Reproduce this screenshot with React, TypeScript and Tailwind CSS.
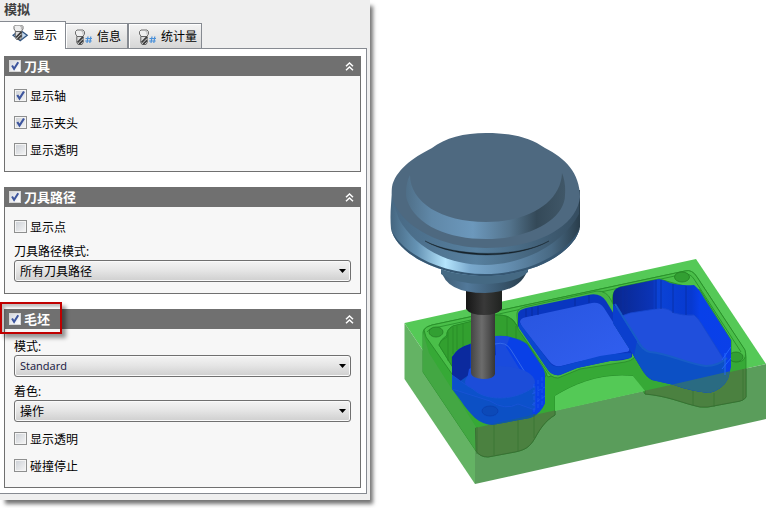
import { useState, type ReactNode } from "react";

const line = "border-[#868a91]";

function MillShape() {
  return (
    <>
      <path d="M3.500 2.500 L5 1 H11 L12.500 2.500 V5 L10.800 7.500 H5.200 L3.500 5 Z" fill="#efefef" stroke="#6f6f6f" strokeWidth="1" />
      <path d="M9.500 2.500 H11 V5.500" fill="none" stroke="#bdbdbd" strokeWidth="1.200" />
      <path d="M4.800 7.500 H11.200 V13.500 L10 15.500 H6 L4.800 13.500 Z" fill="#dcdcdc" stroke="#666" strokeWidth="1" />
      <path d="M5.500 13.500 L11 7.800 M7.200 15.200 L11 11.300" stroke="#3c3c3c" strokeWidth="1.800" />
    </>
  );
}

function DisplayIcon() {
  return (
    <svg width="17" height="17" viewBox="0 0 17 17" className="-mt-1 shrink-0" aria-hidden="true">
      <path d="M8 5 L15.200 10.300 L8.200 15.800 L1 10.300 Z" fill="#c4daf0" stroke="#2f5380" strokeWidth="1.300" />
      <g transform="translate(-1.500 -1)">
        <MillShape />
      </g>
    </svg>
  );
}

function NumberIcon() {
  return (
    <svg width="18" height="17" viewBox="0 0 18 17" className="shrink-0" aria-hidden="true">
      <g transform="translate(-3 0)">
        <MillShape />
      </g>
      <path d="M13 7.500 L12 14 M15.800 7.500 L14.800 14 M10.500 9.500 H17 M10.200 12 H16.700" stroke="#4a90d9" strokeWidth="1.200" />
    </svg>
  );
}

function Check({ label, defaultChecked = false, header = false }: { label: string; defaultChecked?: boolean; header?: boolean }) {
  return (
    <label className={header ? "flex h-5 items-center gap-[3px] text-[13px] leading-5 font-bold text-white" : "flex h-[27px] items-center gap-[3px]"}>
      <span className="grid shrink-0">
        <input
          type="checkbox"
          defaultChecked={defaultChecked}
          className={`peer appearance-none border bg-linear-to-br [grid-area:1/1] ${
            header ? "size-3 border-[#d8d8d8] from-[#d5d8df] to-white" : "size-[13px] border-[#8e8f8f] from-[#cbcfd5] to-[#f6f6f6] shadow-[inset_0_0_0_1px_#f4f4f4]"
          }`}
        />
        <svg
          viewBox="0 0 13 13"
          className={`pointer-events-none invisible [grid-area:1/1] peer-checked:visible ${header ? "size-3" : "size-[13px]"}`}
          aria-hidden="true"
        >
          <path d="M3.300 6 L5.500 9.500 L10 2.500" fill="none" stroke="#3d559e" strokeWidth="2.200" />
        </svg>
      </span>
      <span className={header ? "" : "pt-0.5"}>{label}</span>
    </label>
  );
}

function Select({ id, label, options, latin = false }: { id: string; label: string; options: string[]; latin?: boolean }) {
  return (
    <div>
      <label htmlFor={id} className="block h-5 leading-6">{label}</label>
      <div className="grid items-center">
        <select
          id={id}
          className={`h-[22px] w-full appearance-none rounded-[3px] border border-[#707070] bg-linear-to-b from-[#f4f4f4] from-0% via-[#e6e6e6] via-45% to-[#cfcfcf] pl-[5px] shadow-[inset_0_0_0_1px_#fafafa] [grid-area:1/1] ${
            latin ? "pt-px text-[11px] text-[#14143c] font-['Open_Sans',sans-serif]" : "pt-0.5"
          }`}
        >
          {options.map((o) => <option key={o}>{o}</option>)}
        </select>
        <svg width="7" height="4" viewBox="0 0 7 4" className="pointer-events-none mr-[5px] justify-self-end [grid-area:1/1]" aria-hidden="true">
          <path d="M0 0 H7 L3.500 4 Z" fill="#000" />
        </svg>
      </div>
    </div>
  );
}

function Group({ title, marked = false, children }: { title: string; marked?: boolean; children: ReactNode }) {
  const [open, setOpen] = useState(true);
  return (
    <section>
      <div className="relative flex h-5 items-center justify-between bg-[#707070] pr-[7px] pl-[5px]">
        {marked && <span className="pointer-events-none absolute -top-[7px] -left-1 h-8 w-[62px] border-2 border-[#c00000] shadow-[4px_4px_4px_rgba(0,0,0,0.4),inset_3px_3px_3px_rgba(0,0,0,0.25)]" />}
        <Check label={title} defaultChecked header />
        <button type="button" aria-label={title} aria-expanded={open} onClick={() => setOpen(!open)}>
          <svg width="9" height="9" viewBox="0 0 9 9" className={open ? "" : "rotate-180"} aria-hidden="true">
            <path d="M1 4.200 L4.500 1 L8 4.200 M1 8.200 L4.500 5 L8 8.200" fill="none" stroke="#fff" strokeWidth="1.500" />
          </svg>
        </button>
      </div>
      {open && <div className="border border-t-0 border-[#707070] bg-[#f7f7f7] px-[9px] pt-1.5 pb-2">{children}</div>}
    </section>
  );
}

function Simulation() {
  return (
    <svg viewBox="370 0 397 508" className="block w-full" role="img">
      <defs>
        <clipPath id="front"><path d="M475 428 L766 364 V419 L475 484 Z" /></clipPath>
        <clipPath id="p1"><path d="M452 357 Q458 347 470 344 L495 336 Q503 335 510 337 Q521 339 527 344 L542 366 Q545 370 545 375 V403 Q541 414 530 418 L492 425 Q482 424 475 418 Q466 409 461 401 L452 389 Z" /></clipPath>
        <clipPath id="p3"><path d="M613 295 Q613 289 620 287 L659 279 Q665 280 670 283 Q681 286 694 285 Q700 290 704 298 L731 340 V367 L728 379 Q722 390 709 393 Q690 391 674 385 L652 380 Q646 377 641 368 L632 353 L613 323 Z" /></clipPath>
        <linearGradient id="bevel"><stop offset="0" stopColor="#4f6f88" /><stop offset=".16" stopColor="#6088a8" /><stop offset=".42" stopColor="#6c98bc" /><stop offset=".65" stopColor="#54748d" /><stop offset=".82" stopColor="#344958" /><stop offset="1" stopColor="#405768" /></linearGradient>
        <linearGradient id="ring"><stop offset="0" stopColor="#456680" /><stop offset=".14" stopColor="#6593b4" /><stop offset=".29" stopColor="#b5e5fd" /><stop offset=".42" stopColor="#7aa9cd" /><stop offset=".62" stopColor="#648eb0" /><stop offset=".85" stopColor="#486983" /><stop offset="1" stopColor="#293d4b" /></linearGradient>
        <linearGradient id="under"><stop offset="0" stopColor="#486984" /><stop offset=".45" stopColor="#57809f" /><stop offset="1" stopColor="#354d60" /></linearGradient>
        <linearGradient id="hub"><stop offset="0" stopColor="#3e5c73" /><stop offset=".3" stopColor="#52799a" /><stop offset="1" stopColor="#263c4b" /></linearGradient>
        <linearGradient id="collar"><stop offset="0" stopColor="#161616" /><stop offset=".5" stopColor="#393939" /><stop offset="1" stopColor="#202320" /></linearGradient>
        <linearGradient id="mill"><stop offset="0" stopColor="#454545" /><stop offset=".45" stopColor="#6c6c6c" /><stop offset=".75" stopColor="#505050" /><stop offset="1" stopColor="#363636" /></linearGradient>
        <linearGradient id="floor" x2="1" y2="1"><stop offset="0" stopColor="#2855df" /><stop offset="1" stopColor="#315ff0" /></linearGradient>
        <linearGradient id="wall3"><stop offset="0" stopColor="#0a268a" /><stop offset=".34" stopColor="#0b34b7" /><stop offset=".38" stopColor="#0b43d5" /><stop offset=".65" stopColor="#0739d0" /><stop offset=".72" stopColor="#0840e9" /><stop offset="1" stopColor="#0b40e8" /></linearGradient>
      </defs>

      <path d="M404.500 323 L696 259 L766 364 L475 428 Z" fill="#55c957" />
      <path d="M404.500 323 L475 428 V484 L404.500 379 Z" fill="#64b364" />
      <path d="M475 428 L766 364 V419 L475 484 Z" fill="#5a9d5b" />

      <path d="M423 332 Q424 327 432 325 L685 271 Q692 269 697 277 L744 349 Q746 352 746 357 V397 Q744 401 735 402 L708 407 Q700 408 692 405 C680 402 667 396 645 394 L633 376 C604 373 577 382 555 396 V415 C545 421 540 429 535 438 C530 447 525 450 515 452 L488 457 Q480 457 476 451 L423 372 Z" fill="#36a936" stroke="#278b29" strokeWidth=".8" />
      <path d="M423 332 V372 L476 451 V427 L429 353 Z" fill="#43a743" />
      <g clipPath="url(#front)">
        <path d="M475 410 L555 390 V415 C545 421 540 429 535 438 C530 447 525 450 515 452 L488 457 Q480 457 476 451 Z M645 376 L746 340 V397 Q744 401 735 402 L708 407 Q700 408 692 405 C680 402 667 396 645 394 Z" fill="#4b8140" stroke="#376a32" strokeWidth=".8" />
      </g>
      <path d="M555 396 C577 382 604 373 633 376 L645 391 L555 411 Z" fill="#54c956" />

      <path d="M424 330 Q425 327 432 325 L685 271 Q692 269 697 277 L745 350 Q747 358 742 361 Q734 363 731 360 L731 340 L700 290 L677 284 L659 279 L620 287 Q610 292 613 305 L632 350 L617 360 L577 368 L548 377 L520 333 Q515 315 500 315 L453 326 Q446 330 447 335 Q440 340 439 345 L455 371 L452 374 L426 337 Z" fill="#4abf49" stroke="#2a912b" strokeWidth="1" />
      <path d="M427 332 Q428 329 434 328 L684 274 Q690 273 694 279 L741 352" fill="none" stroke="#27912a" strokeWidth=".9" />
      <path d="M439 345 Q440 340 447 337 Q446 330 453 326 L496 315 Q511 314 517 326 L547 374 L543 380 L530 348 L500 337 L470 344 L452 357 V366 Z" fill="#32a02f" stroke="#248625" strokeWidth=".7" />
      <path d="M448 332 V361 M453 327 V354 M457 326 V350 M463 324 V347 M507 317 V337 M516 326 V340" stroke="#268b27" strokeWidth=".8" />
      <path d="M517 316 Q516 309 524 307 L597 291 Q607 291 611 300 L637 350 Q637 360 625 362 L580 369 L558 378 Q551 378 547 371 L518 329 Z" fill="#46b744" stroke="#28892a" strokeWidth=".8" />
      <g fill="#329f32" stroke="#247d25" strokeWidth=".8">
        <ellipse cx="436" cy="332" rx="7" ry="5" /><ellipse cx="682" cy="277" rx="7.500" ry="5" /><ellipse cx="736" cy="357" rx="7" ry="5" />
      </g>

      <path d="M518 314 Q518 310 526 308 L588 295 Q600 292 606 301 L632 344 V357 Q625 361 610 361 L577 368 L560 375 Q552 376 548 370 L518 326 Z" fill="#0936c0" />
      <path d="M520 322 Q520 318 527 317 L592 303 Q600 302 604 308 L629 347 Q631 352 625 352 L577 362 L561 366 Q554 367 550 362 L522 327 Z" fill="url(#floor)" />
      <path d="M550 363 Q554 368 562 366 L600 356 Q617 353 631 353 V358 L610 361 L577 368 L560 375 Q552 376 548 370 L519 328 V322 Z" fill="#0b47cf" />
      <path d="M526 309 V317 M532 307 V316 M538 306 V315 M575 298 V306 M589 295 V303" stroke="#082b9e" />

      <g clipPath="url(#p1)">
        <path d="M445 330 H550 V430 H445 Z" fill="#0c50c5" />
        <path d="M452 350 L470 344 V374 L452 387 Z" fill="#0b2a9e" />
        <path d="M470 344 L495 336 L497 362 L470 376 Z" fill="#0837be" />
        <path d="M495 336 H510 L535 390 L465 390 L469 369 L496 355 Z" fill="#1a4bdd" />
        <path d="M510 337 L527 344 L545 373 V405 L533 418 L531 388 L506 347 Z" fill="#0940e7" />
        <path d="M495 344 Q506 341 511 350 L533 385 Q536 392 528 396" fill="none" stroke="#3569e9" />
        <ellipse cx="500" cy="382" rx="35" ry="16" fill="#1c4dd9" />
        <path d="M452 375 Q470 388 473 389 C486 402 517 401 535 386 V410 L518 404 Q505 411 490 401 L452 389 Z" fill="#0c51cb" stroke="#1d55d9" strokeWidth=".7" />
        <ellipse cx="490" cy="411" rx="8" ry="5" fill="#0c49b8" stroke="#0c3eaa" strokeWidth=".7" />
        <path d="M534 384 V413 M538 380 V409 M542 377 V405 M532 394 L545 387 M532 405 L545 396" stroke="#2058ee" strokeWidth=".8" strokeDasharray="4 2" />
        <path d="M475 428 L545 412 V430 Z" fill="#125ba0" />
      </g>
      <path d="M477 427 V454 M494 425 V455 M518 420 V451 M534 414 V438 M693 389 V405 M714 393 V407 M743 369 V399" stroke="#397334" strokeWidth=".8" />

      <g clipPath="url(#p3)">
        <path d="M610 275 H735 V398 H610 Z" fill="url(#wall3)" />
        <path d="M613 319 L630 313 L662 308 Q670 309 674 313 Q684 316 694 315 Q698 318 701 323 L723 358 Q725 364 710 367 Q695 366 649 353 Q640 348 636 342 L613 324 Z" fill="#204fdc" stroke="#1747cf" strokeWidth=".8" />
        <path d="M613 304 L636 341 Q641 350 650 352 C670 354 688 364 706 366 Q718 366 726 358 V395 H640 L613 323 Z" fill="#0c50c5" />
        <path d="M613 304 L618 310 L637 341 L634 356 L613 323 Z" fill="#0b3fce" />
        <path d="M615 304 L638 341 Q642 350 650 352 C670 354 688 364 706 366 Q718 366 727 358" fill="none" stroke="#175cc8" strokeWidth="2" />
        <path d="M666 386 L731 371 V398 Z" fill="#2a6b82" />
        <path d="M623 287 V315 M629 286 V313 M656 280 V309 M661 280 V309 M673 284 V313 M686 286 V315" stroke="#082fa1" strokeWidth=".8" />
        <path d="M722 360 L731 347 M722 369 L731 358 M725 353 V375" stroke="#2468ff" strokeWidth=".9" />
      </g>

      <path d="M471 309 H495 V374 Q494 379 483 379 Q471 378 471 373 Z" fill="url(#mill)" />
      <path d="M466 288 H502 V309 Q497 315 484 315 Q470 315 466 309 Z" fill="url(#collar)" />
      <path d="M441 270 Q446 293 485 293 Q522 292 528 268 Z" fill="url(#hub)" />
      <path d="M441 274 Q456 284 485 284 Q517 283 528 272 V265 H441 Z" fill="#456983" />
      <path d="M392 190 L391 205 Q390 217 391 229 C397 253 437 276 485 276 C535 276 576 251 580 227 V190 Z" fill="url(#ring)" />
      <path d="M391 229 C397 253 437 276 485 276 C535 276 576 251 580 227 C572 249 533 274 485 274 C441 274 401 253 391 229" fill="#365772" />
      <path d="M392 200 L399 219 C413 245 445 265 485 265 C530 264 565 240 579 214 V195 H392 Z" fill="url(#under)" />
      <path d="M425 241 C456 259 515 260 549 241 C519 258 455 257 425 241" fill="#17232b" stroke="#17232b" strokeWidth=".4" />
      <path d="M392 187 C395 171 412 158 432 148 C445 138 464 133 486 133 C514 133 530 138 545 148 C565 158 580 173 580 197 C577 226 538 248 486 248 C432 248 388 217 392 187 Z" fill="#4e6980" />
      <path d="M410 175 C406 182 405 194 407 200 C416 226 449 239 486 239 C530 239 565 219 565 195 Q566 183 562 173 C561 202 529 222 486 222 C441 222 410 202 410 175 Z" fill="url(#bevel)" />
    </svg>
  );
}

const tabs = [
  { name: "显示", size: "w-[66px] gap-1 pl-3" },
  { name: "信息", size: "w-[62px] gap-1 pl-[9px]" },
  { name: "统计量", size: "w-[74px] gap-1 border-l pl-[10px]" },
];

export default function App() {
  const [active, setActive] = useState(0);
  return (
    <main className="flex min-h-screen items-start bg-white font-['Open_Sans','Noto_Sans_CJK_SC',sans-serif] text-xs text-black">
      <aside className="w-[370px] shrink-0 bg-[#efefef] pb-1.5 shadow-[4px_5px_4px_-1px_rgba(0,0,0,0.55)]">
        <h1 className="h-[21px] pl-1 text-[13px] leading-[19px] font-bold text-[#404040]">模拟</h1>
        <div role="tablist" className="flex h-[27px] items-end">
          {tabs.map((tab, i) => (
            <button
              key={tab.name}
              type="button"
              role="tab"
              aria-selected={active === i}
              onClick={() => setActive(i)}
              className={`flex items-center border-t border-r whitespace-nowrap ${line} ${tab.size} ${
                active === i ? "z-10 -mb-px h-7 bg-white" : "h-[25px] bg-linear-to-b from-[#f5f5f5] to-[#d6d6d6] pt-0.5 shadow-[inset_1px_1px_0_#fff]"
              }`}
            >
              {i === 0 ? <DisplayIcon /> : <NumberIcon />}
              {tab.name}
            </button>
          ))}
        </div>
        <div className={`mr-[3px] flex flex-col gap-[15px] border border-l-0 bg-white pt-[7px] pr-[5px] pb-[5px] pl-1 ${line}`}>
          <Group title="刀具">
            <Check label="显示轴" defaultChecked />
            <Check label="显示夹头" defaultChecked />
            <Check label="显示透明" />
          </Group>
          <Group title="刀具路径">
            <Check label="显示点" />
            <div className="pb-[3px]">
              <Select id="path-mode" label="刀具路径模式:" options={["所有刀具路径"]} />
            </div>
          </Group>
          <Group title="毛坯" marked>
            <div className="flex flex-col gap-[3px] pb-[3px]">
              <Select id="stock-mode" label="模式:" options={["Standard"]} latin />
              <Select id="colorization" label="着色:" options={["操作"]} />
            </div>
            <Check label="显示透明" />
            <Check label="碰撞停止" />
          </Group>
        </div>
      </aside>
      <div className="min-w-0 flex-1">
        <Simulation />
      </div>
    </main>
  );
}
